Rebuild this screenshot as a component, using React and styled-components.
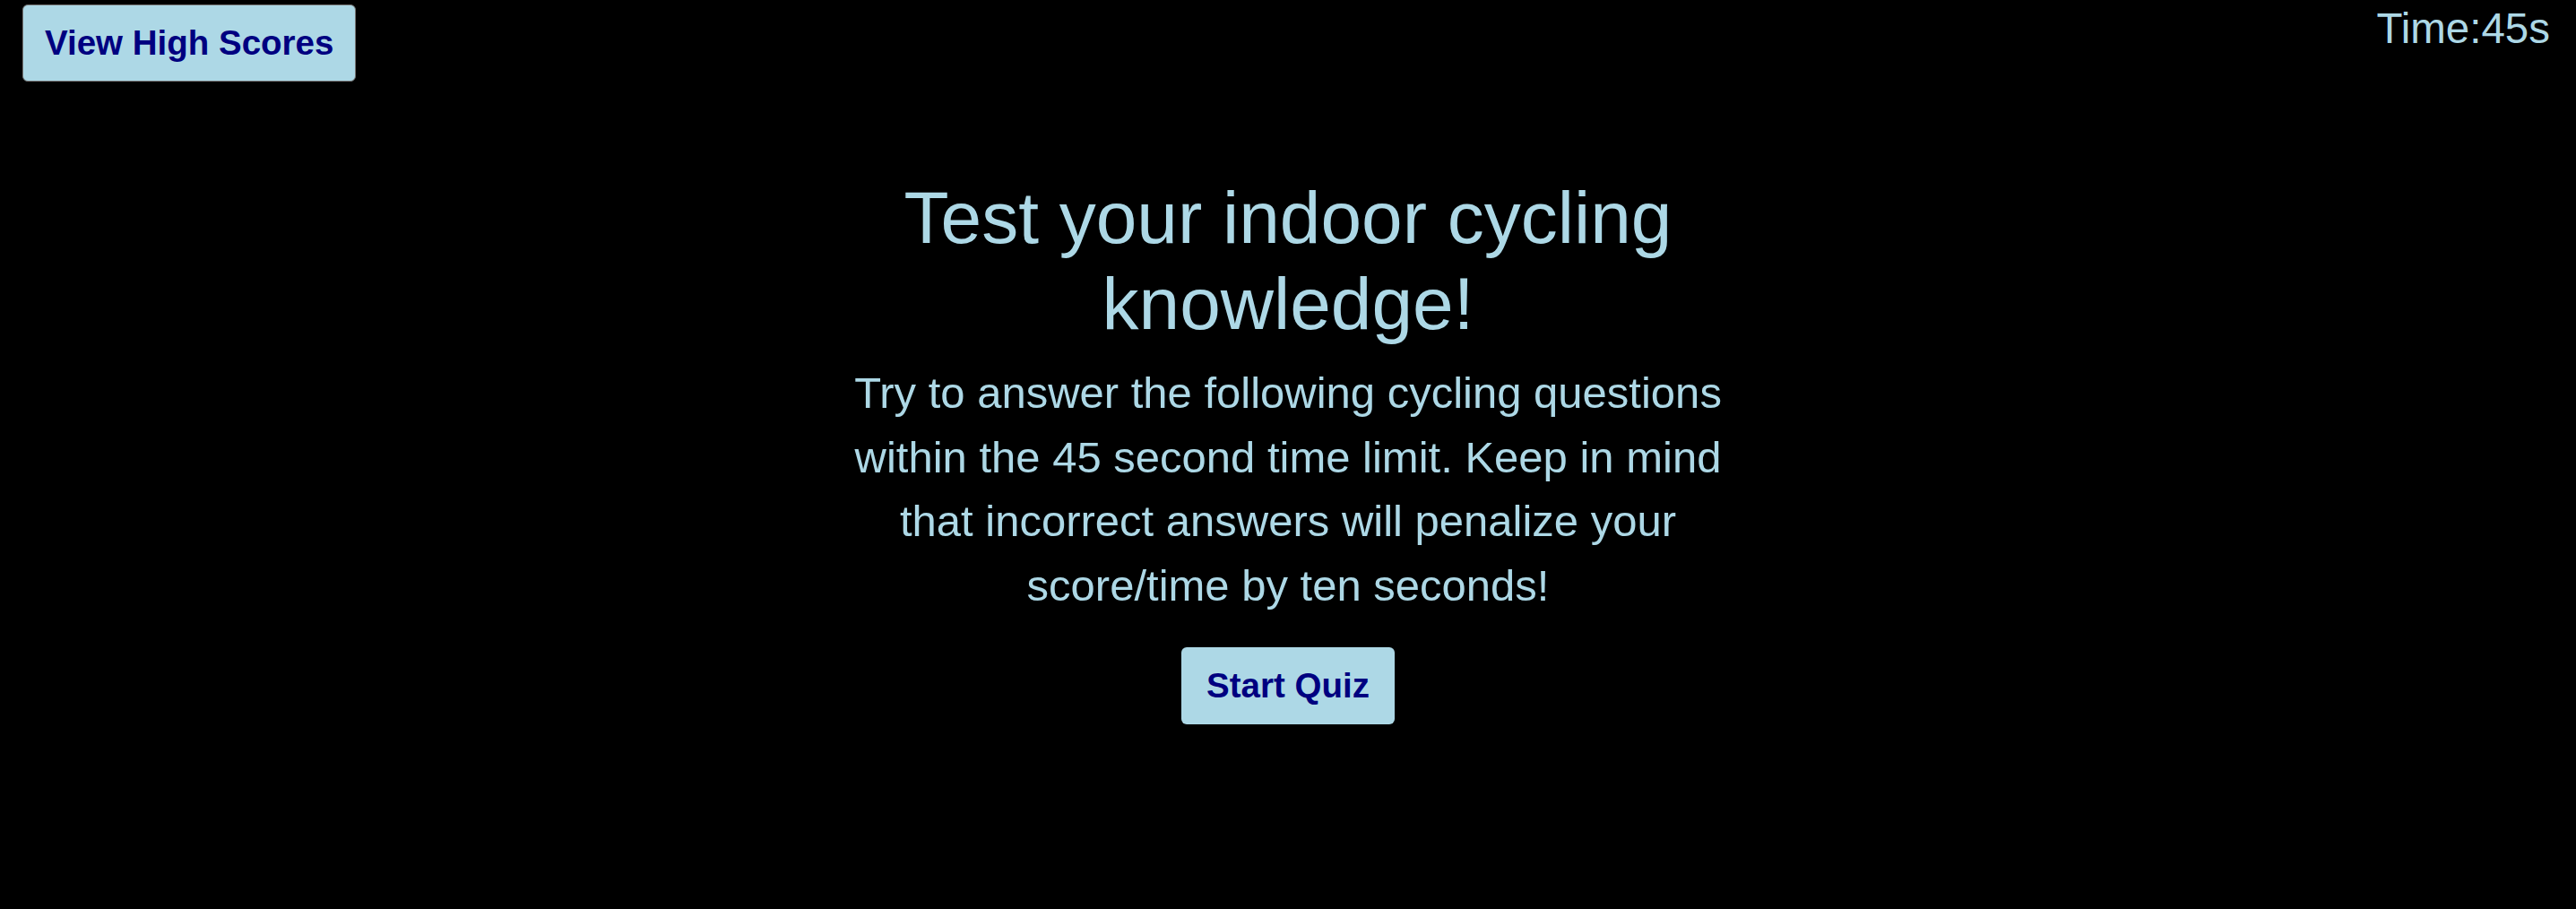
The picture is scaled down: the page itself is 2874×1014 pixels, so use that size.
import styled, { createGlobalStyle } from "styled-components";

const GlobalStyle = createGlobalStyle`
  html,
  body {
    margin: 0;
    padding: 0;
    background: #000;
  }
  body {
    font-family: "Liberation Sans", Arial, sans-serif;
    color: lightblue;
  }
`;

const Page = styled.div`
  height: 100vh;
  overflow: hidden;
  background: #000;
`;

const Header = styled.header`
  display: flex;
  justify-content: space-between;
  align-items: flex-start;
  padding: 5px 29px 0 25px;
`;

const Button = styled.button`
  font-family: "Liberation Sans", Arial, sans-serif;
  font-size: 38.5px;
  font-weight: bold;
  line-height: normal;
  color: navy;
  background: lightblue;
  border: ${(p) => (p.$outlined ? "1px solid #767676" : "none")};
  border-radius: 6px;
  padding: ${(p) => (p.$outlined ? "20px 24px" : "21px 28px")};
  cursor: pointer;
`;

const Timer = styled.div`
  font-size: 47.5px;
  line-height: normal;
  margin-top: -1px;
`;

const Main = styled.main`
  width: 1040px;
  margin: 104px auto 0;
  display: flex;
  flex-direction: column;
  align-items: center;
  text-align: center;
`;

const Title = styled.h1`
  font-size: 82px;
  font-weight: normal;
  line-height: 96px;
  margin: 0;
`;

const Intro = styled.p`
  font-size: 49px;
  line-height: 71.5px;
  margin: 16px 0 33px;
`;

export default function App() {
  return (
    <Page>
      <GlobalStyle />
      <Header>
        <Button $outlined>View High Scores</Button>
        <Timer>Time:45s</Timer>
      </Header>
      <Main>
        <Title>Test your indoor cycling knowledge!</Title>
        <Intro>
          Try to answer the following cycling questions within the 45 second
          time limit. Keep in mind that incorrect answers will penalize your
          score/time by ten seconds!
        </Intro>
        <Button>Start Quiz</Button>
      </Main>
    </Page>
  );
}
